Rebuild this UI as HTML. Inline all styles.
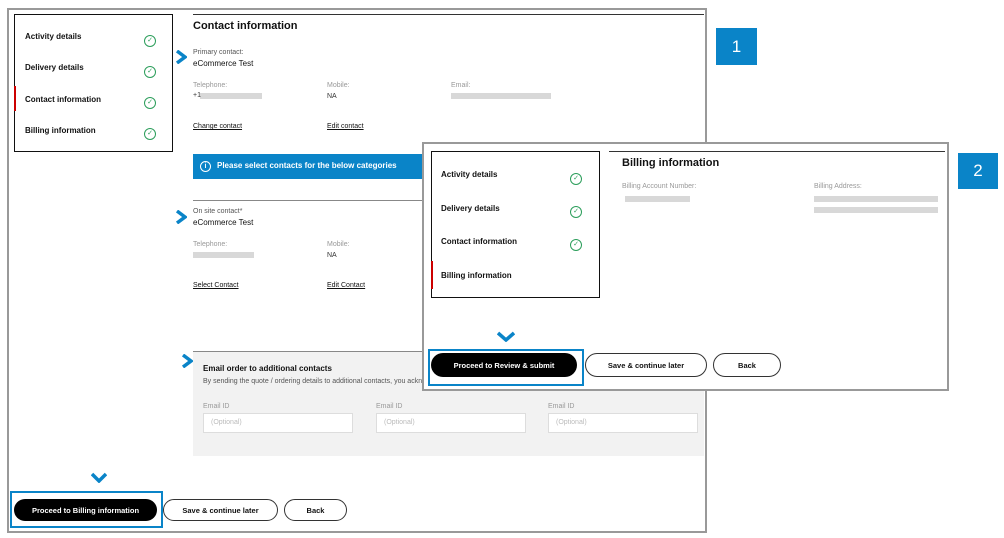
<!DOCTYPE html><html><head><style>
body{margin:0;width:1004px;height:538px;background:#fff;position:relative;overflow:hidden;font-family:"Liberation Sans",sans-serif;color:#111}
.a{position:absolute}
.b{font-weight:bold}
.s{font-size:8px}
.g{color:#999;font-size:7px}
.bl{background:#d8d8d8;height:6px}
.u{text-decoration:underline;font-size:7px}
.btn{position:absolute;border-radius:14px;font-size:7.5px;font-weight:bold;display:flex;align-items:center;justify-content:center;box-sizing:border-box}
.k{background:#000;color:#fff}
.w{background:#fff;border:1px solid #333;color:#111}
.chk{position:absolute;width:10px;height:10px;border:1px solid #2c9e5b;border-radius:50%;color:#2c9e5b;font-size:7px;line-height:10px;text-align:center}
.inp{position:absolute;width:150px;height:20px;background:#fff;border:1px solid #ddd;box-sizing:border-box;color:#bbb;font-size:7px;padding:5px 7px}
.badge{position:absolute;background:#0a84c8;color:#fff;font-size:17px;display:flex;align-items:center;justify-content:center}
svg.arr{position:absolute}
</style></head><body>
<div class="a" style="left:7px;top:8px;width:696px;height:521px;border:2px solid #999"></div>
<div class="a" style="left:14px;top:14px;width:157px;height:136px;border:1px solid #111"></div>
<div class="a" style="left:14px;top:86px;width:2px;height:25px;background:#c00"></div>
<div class="a b s" style="left:25px;top:32px">Activity details</div><div class="chk" style="left:144px;top:35px">✓</div>
<div class="a b s" style="left:25px;top:63px">Delivery details</div><div class="chk" style="left:144px;top:66px">✓</div>
<div class="a b s" style="left:25px;top:95px">Contact information</div><div class="chk" style="left:144px;top:97px">✓</div>
<div class="a b s" style="left:25px;top:126px">Billing information</div><div class="chk" style="left:144px;top:128px">✓</div>
<div class="a" style="left:193px;top:14px;width:511px;height:1px;background:#333"></div>
<div class="a b" style="left:193px;top:20px;font-size:11px">Contact information</div>
<svg class="arr" style="left:175px;top:50px" width="12" height="14"><path d="M2 1 L10 7 L2 13" fill="none" stroke="#0a84c8" stroke-width="3.5"/></svg>
<div class="a g" style="left:193px;top:49px;color:#555">Primary contact:</div>
<div class="a s" style="left:193px;top:59px">eCommerce Test</div>
<div class="a g" style="left:193px;top:82px">Telephone:</div><div class="a bl" style="left:200px;top:93px;width:62px"></div><div class="a g" style="left:193px;top:92px;color:#333">+1</div>
<div class="a g" style="left:327px;top:82px">Mobile:</div><div class="a g" style="left:327px;top:93px;color:#333">NA</div>
<div class="a g" style="left:451px;top:82px">Email:</div><div class="a bl" style="left:451px;top:93px;width:100px"></div>
<div class="a u" style="left:193px;top:123px">Change contact</div><div class="a u" style="left:327px;top:123px">Edit contact</div>
<div class="a" style="left:193px;top:154px;width:511px;height:25px;background:#0a84c8"></div>
<div class="a b" style="left:200px;top:161px;color:#fff;font-size:8px"><span style="display:inline-block;width:9px;height:9px;border:1px solid #fff;border-radius:50%;font-size:7px;text-align:center;line-height:9px;margin-right:6px">i</span>Please select contacts for the below categories</div>
<div class="a" style="left:193px;top:200px;width:511px;height:1px;background:#888"></div>
<svg class="arr" style="left:175px;top:210px" width="12" height="14"><path d="M2 1 L10 7 L2 13" fill="none" stroke="#0a84c8" stroke-width="3.5"/></svg>
<div class="a g" style="left:193px;top:208px;color:#555">On site contact*</div>
<div class="a s" style="left:193px;top:218px">eCommerce Test</div>
<div class="a g" style="left:193px;top:241px">Telephone:</div><div class="a bl" style="left:193px;top:252px;width:61px"></div>
<div class="a g" style="left:327px;top:241px">Mobile:</div><div class="a g" style="left:327px;top:252px;color:#333">NA</div>
<div class="a u" style="left:193px;top:282px">Select Contact</div><div class="a u" style="left:327px;top:282px">Edit Contact</div>
<div class="a" style="left:193px;top:351px;width:511px;height:104px;background:#f2f2f2;border-top:1px solid #888"></div>
<svg class="arr" style="left:181px;top:354px" width="12" height="14"><path d="M2 1 L10 7 L2 13" fill="none" stroke="#0a84c8" stroke-width="3.5"/></svg>
<div class="a b s" style="left:203px;top:364px">Email order to additional contacts</div>
<div class="a g" style="left:203px;top:378px;color:#555">By sending the quote / ordering details to additional contacts, you acknowledge</div>
<div class="a g" style="left:203px;top:403px">Email ID</div><div class="inp" style="left:203px;top:413px">(Optional)</div>
<div class="a g" style="left:376px;top:403px">Email ID</div><div class="inp" style="left:376px;top:413px">(Optional)</div>
<div class="a g" style="left:548px;top:403px">Email ID</div><div class="inp" style="left:548px;top:413px">(Optional)</div>
<svg class="arr" style="left:91px;top:472px" width="16" height="11"><path d="M1 2 L8 9 L15 2" fill="none" stroke="#0a84c8" stroke-width="3.5"/></svg>
<div class="a" style="left:10px;top:491px;width:149px;height:33px;border:2px solid #0a84c8"></div>
<div class="btn k" style="left:14px;top:499px;width:143px;height:22px">Proceed to Billing information</div>
<div class="btn w" style="left:163px;top:499px;width:115px;height:22px">Save &amp; continue later</div>
<div class="btn w" style="left:284px;top:499px;width:63px;height:22px">Back</div>
<div class="badge" style="left:716px;top:28px;width:41px;height:37px">1</div>
<div class="a" style="left:422px;top:142px;width:523px;height:245px;border:2px solid #999;background:#fff"></div>
<div class="a" style="left:431px;top:151px;width:167px;height:145px;border:1px solid #111"></div>
<div class="a" style="left:431px;top:261px;width:2px;height:28px;background:#c00"></div>
<div class="a b s" style="left:441px;top:170px">Activity details</div><div class="chk" style="left:570px;top:173px">✓</div>
<div class="a b s" style="left:441px;top:204px">Delivery details</div><div class="chk" style="left:570px;top:206px">✓</div>
<div class="a b s" style="left:441px;top:237px">Contact information</div><div class="chk" style="left:570px;top:239px">✓</div>
<div class="a b s" style="left:441px;top:271px">Billing information</div>
<div class="a" style="left:609px;top:151px;width:336px;height:1px;background:#333"></div>
<div class="a b" style="left:622px;top:157px;font-size:11px">Billing information</div>
<div class="a g" style="left:622px;top:183px">Billing Account Number:</div><div class="a bl" style="left:625px;top:196px;width:65px"></div>
<div class="a g" style="left:814px;top:183px">Billing Address:</div><div class="a bl" style="left:814px;top:196px;width:124px"></div><div class="a bl" style="left:814px;top:207px;width:124px"></div>
<svg class="arr" style="left:497px;top:331px" width="18" height="11"><path d="M1 2 L9 9 L17 2" fill="none" stroke="#0a84c8" stroke-width="3.5"/></svg>
<div class="a" style="left:428px;top:349px;width:152px;height:33px;border:2px solid #0a84c8"></div>
<div class="btn k" style="left:431px;top:353px;width:146px;height:24px">Proceed to Review &amp; submit</div>
<div class="btn w" style="left:585px;top:353px;width:122px;height:24px">Save &amp; continue later</div>
<div class="btn w" style="left:713px;top:353px;width:68px;height:24px">Back</div>
<div class="badge" style="left:958px;top:153px;width:40px;height:36px">2</div>
</body></html>
